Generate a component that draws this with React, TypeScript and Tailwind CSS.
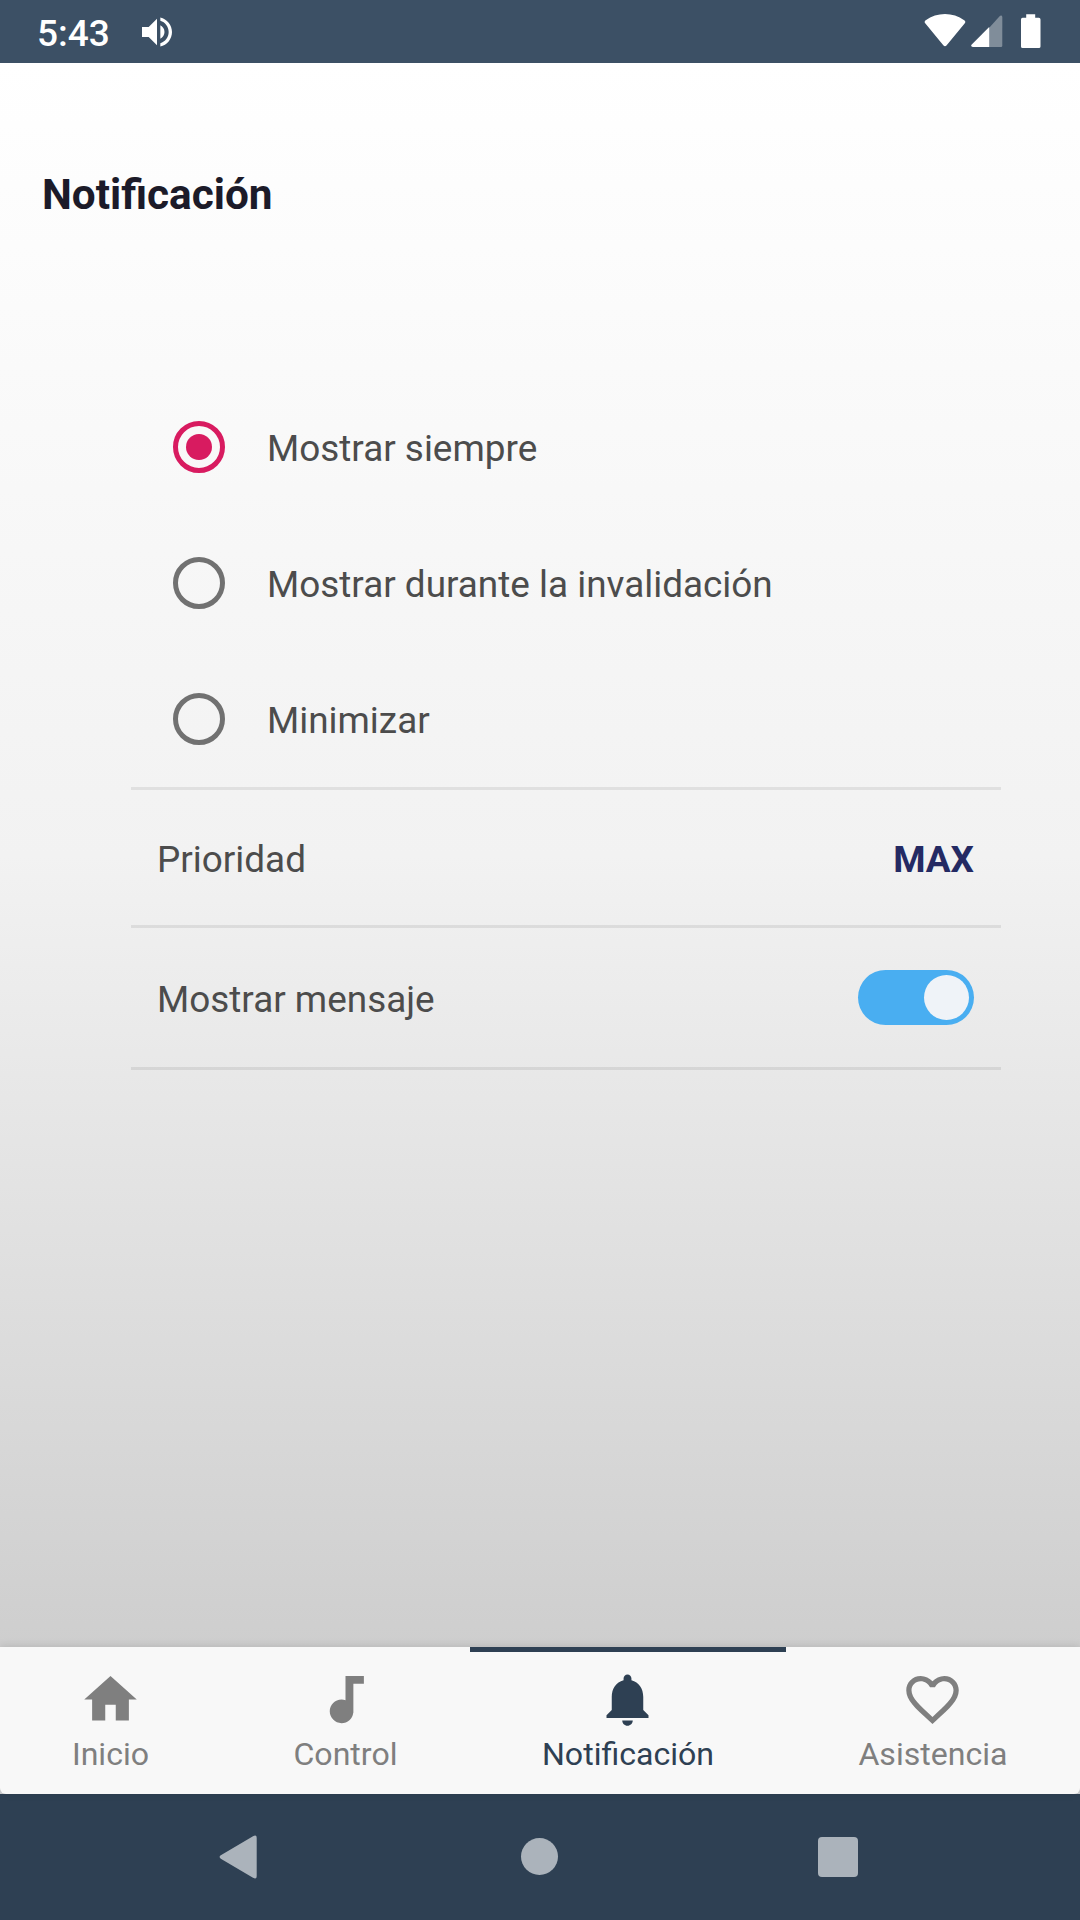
import { useState } from "react";

interface Tab {
  label: string;
  width: string;
  iconClass: string;
  path: string;
}

const tabs: Tab[] = [
  {
    label: "Inicio",
    width: "w-[221px]",
    iconClass: "size-[63px]",
    path: "M10 20v-6h4v6h5v-8h3L12 3 2 12h3v8z",
  },
  {
    label: "Control",
    width: "w-[249px]",
    iconClass: "size-[63px]",
    path: "M12 3v9.28c-.47-.17-.97-.28-1.5-.28C8.01 12 6 14.01 6 16.5S8.01 21 10.5 21c2.31 0 4.2-1.75 4.45-4H15V6h4V3h-7z",
  },
  {
    label: "Notificación",
    width: "w-[316px]",
    iconClass: "mr-px size-[63px]",
    path: "M12 22c1.1 0 2-.9 2-2h-4c0 1.1.89 2 2 2zm6-6v-5c0-3.07-1.64-5.64-4.5-6.32V4c0-.83-.67-1.5-1.5-1.5s-1.5.67-1.5 1.5v.68C7.63 5.36 6 7.92 6 11v5l-2 2v1h16v-1l-2-2z",
  },
  {
    label: "Asistencia",
    width: "w-[294px]",
    iconClass: "mr-px size-[63px]",
    path: "M16.5 3c-1.74 0-3.41.81-4.5 2.09C10.91 3.81 9.24 3 7.5 3 4.42 3 2 5.42 2 8.5c0 3.78 3.4 6.86 8.55 11.54L12 21.35l1.45-1.32C18.6 15.36 22 12.28 22 8.5 22 5.42 19.58 3 16.5 3zm-4.4 15.55l-.1.1-.1-.1C7.14 14.24 4 11.39 4 8.5 4 6.5 5.5 5 7.5 5c1.54 0 3.04.99 3.57 2.36h1.87C13.46 5.99 14.96 5 16.5 5c2 0 3.5 1.5 3.5 3.5 0 2.89-3.14 5.74-7.9 10.05z",
  },
];

const options = ["Mostrar siempre", "Mostrar durante la invalidación", "Minimizar"];

function StatusBar() {
  return (
    <header className="flex h-[63px] items-center bg-[#3c5065] pr-[39px] pl-[37px] text-white">
      <span className="w-[100px] pt-[3px] text-[37px] leading-none font-medium">5:43</span>
      <svg className="size-10" viewBox="0 0 24 24" fill="currentColor">
        <path d="M3 9v6h4l5 5V4L7 9H3zm13.5 3c0-1.77-1.02-3.29-2.5-4.03v8.05c1.48-.73 2.5-2.25 2.5-4.02zM14 3.23v2.06c2.89.86 5 3.54 5 6.71s-2.11 5.85-5 6.71v2.06c4.01-.91 7-4.49 7-8.77s-2.99-7.86-7-8.77z" />
      </svg>
      <div className="ml-auto flex">
        {/* wifi */}
        <svg className="h-[35px] w-[42px]" viewBox="0 0 42 35" fill="currentColor">
          <path d="M1.2 9.2Q-.1 7.6 1.7 6.3C13-2 29-2 40.2 6.3q1.900 1.300.6 2.900L22.700 31.200q-1.700 2-3.400 0z" />
        </svg>
        {/* signal */}
        <svg className="ml-[5px] h-[35px] w-[32px]" viewBox="0 0 32 35" fill="currentColor">
          <path d="M18 14.1V33h12q1.3 0 1.3-1.3V3.2c0-1.7-1.5-2.1-2.7-1z" opacity=".35" />
          <path d="M18.2 13v20H1.8Q-.6 32.8.5 30.7z" />
        </svg>
        {/* battery */}
        <svg className="ml-[18px] h-[35px] w-[20px]" viewBox="0 0 20 35" fill="currentColor">
          <path d="M5.2.3h9v3.5h3.7q1.6 0 1.6 1.6v27q0 1.6-1.6 1.6H1.6Q0 34 0 32.4v-27Q0 3.8 1.6 3.8h3.6z" />
        </svg>
      </div>
    </header>
  );
}

function App() {
  const [selected, setSelected] = useState(0);
  const [showMessage, setShowMessage] = useState(true);
  const [activeTab, setActiveTab] = useState(2);

  return (
    <div className="flex h-[1920px] w-[1080px] flex-col overflow-hidden bg-[#2e4053] font-[Roboto,sans-serif]">
      <StatusBar />

      <main className="h-[1584px] bg-linear-[180deg,#ffffff_0%,#f2f2f2_50%,#cecece_100%] pt-[107px]">
        <h1 className="pl-[42px] text-[42.3px] leading-[50px] font-bold text-[#1c1b29]">
          Notificación
        </h1>

        <section className="mt-[159px] ml-[131px] w-[870px] text-[36.9px] text-[#4c4c4c]">
          {options.map((option, index) => (
            <button
              key={option}
              type="button"
              onClick={() => setSelected(index)}
              className="flex h-[136px] w-full items-center pl-[42px] text-left"
            >
              {selected === index ? (
                <span className="flex size-[52px] items-center justify-center rounded-full border-[5px] border-[#d81b60]">
                  <span className="size-[26px] rounded-full bg-[#d81b60]" />
                </span>
              ) : (
                <span className="size-[52px] rounded-full border-[5px] border-[#717171]" />
              )}
              <span className="ml-[42px] pt-[4px]">{option}</span>
            </button>
          ))}

          <div className="flex h-[141px] items-center justify-between border-y-[3px] border-black/8 pr-[27px] pl-[26px]">
            <span className="pt-[4px]">Prioridad</span>
            <span className="pt-[4px] font-bold text-[#242a63]">MAX</span>
          </div>

          <div className="flex h-[142px] items-center justify-between border-b-[3px] border-black/8 pr-[27px] pl-[26px]">
            <span className="pt-[4px]">Mostrar mensaje</span>
            <button
              type="button"
              onClick={() => setShowMessage(!showMessage)}
              className={
                showMessage
                  ? "flex h-[55px] w-[116px] items-center justify-end rounded-full bg-[#49aef1] p-[5px]"
                  : "flex h-[55px] w-[116px] items-center justify-start rounded-full bg-[#b5b5b5] p-[5px]"
              }
            >
              <span className="size-[45px] rounded-full bg-[#eff3f8]" />
            </button>
          </div>
        </section>
      </main>

      <div className="bg-[#cfd0d2]">
        <nav className="flex h-[147px] rounded-b-[6px] bg-[#f8f8f8] shadow-[0_-1px_8px_rgba(0,0,0,0.12)]">
          {tabs.map((tab, index) => (
            <button
              key={tab.label}
              type="button"
              onClick={() => setActiveTab(index)}
              className={`${tab.width} flex flex-col items-center border-t-[5px] pt-[16px] ${
                activeTab === index
                  ? "border-[#2e4053] text-[#2e4053]"
                  : "border-transparent text-[#7f7f7f]"
              }`}
            >
              <svg className={tab.iconClass} viewBox="0 0 24 24" fill="currentColor">
                <path d={tab.path} />
              </svg>
              <span className="mt-[4px] text-[32.1px] leading-[38px]">{tab.label}</span>
            </button>
          ))}
        </nav>
      </div>

      {/* system navigation */}
      <footer className="flex h-[126px] items-center pl-[219px] text-[#abb3bb]">
        <svg className="h-[44px] w-[39px]" viewBox="0 0 39 44" fill="currentColor">
          <path d="M1.8 20.3 34 1.2q3.7-1.9 3.7 1.5v38.6q0 3.4-3.7 1.5L1.8 23.7q-2.4-1.7 0-3.4z" />
        </svg>
        <span className="-mt-px ml-[263px] size-[37px] rounded-full bg-current" />
        <span className="ml-[260px] size-10 rounded-[4px] bg-current" />
      </footer>
    </div>
  );
}

export default App;
